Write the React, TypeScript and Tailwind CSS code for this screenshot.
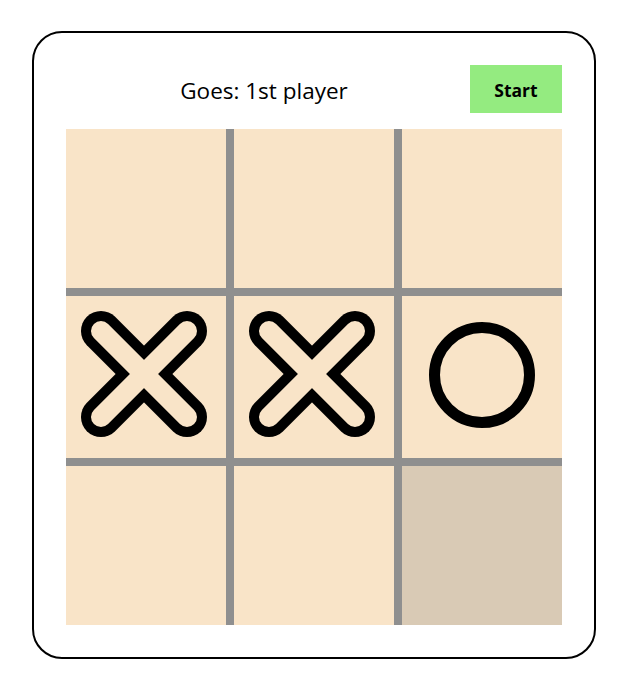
import React from "react";

type Mark = "X" | "O" | null;

const board: Mark[] = [null, null, null, "X", "X", "O", null, null, null];

function XMark() {
  return (
    <svg width="160" height="160" viewBox="0 0 160 160">
      <g strokeLinecap="round">
        <line x1="35" y1="34" x2="121" y2="120" stroke="#000" strokeWidth="40" />
        <line x1="121" y1="34" x2="35" y2="120" stroke="#000" strokeWidth="40" />
        <line x1="35" y1="34" x2="121" y2="120" stroke="#f9e4c8" strokeWidth="20" />
        <line x1="121" y1="34" x2="35" y2="120" stroke="#f9e4c8" strokeWidth="20" />
      </g>
    </svg>
  );
}

function OMark() {
  return (
    <svg width="160" height="160" viewBox="0 0 160 160">
      <circle cx="80" cy="78" r="47.5" fill="none" stroke="#000" strokeWidth="11" />
    </svg>
  );
}

export default function App() {
  return (
    <div className="w-[633px] h-[693px] bg-white pt-[31px] pl-[32px] font-['Open_Sans','Noto_Sans',sans-serif]">
      <div className="w-[564px] h-[628px] border-2 border-black rounded-[30px] px-[32px] pt-[32px]">
        {/* header */}
        <div className="flex items-center h-[48px]">
          <div className="flex-1 text-center text-[22.5px] text-black pr-[8px] pt-[4px]">Goes: 1st player</div>
          <button className="w-[92px] h-[48px] bg-[#94eb80] text-[17.5px] font-bold text-black pt-[2px]">Start</button>
        </div>

        {/* board */}
        <div className="mt-[16px] grid grid-cols-[160px_160px_160px] grid-rows-[159px_162px_159px] gap-[8px] bg-[#8f8f8f] w-[496px]">
          {board.map((m, i) => (
            <div
              key={i}
              className={`flex items-center justify-center overflow-hidden ${i === 8 ? "bg-[#d9cab5]" : "bg-[#f9e4c8]"}`}
            >
              {m === "X" && <XMark />}
              {m === "O" && <OMark />}
            </div>
          ))}
        </div>
      </div>
    </div>
  );
}
